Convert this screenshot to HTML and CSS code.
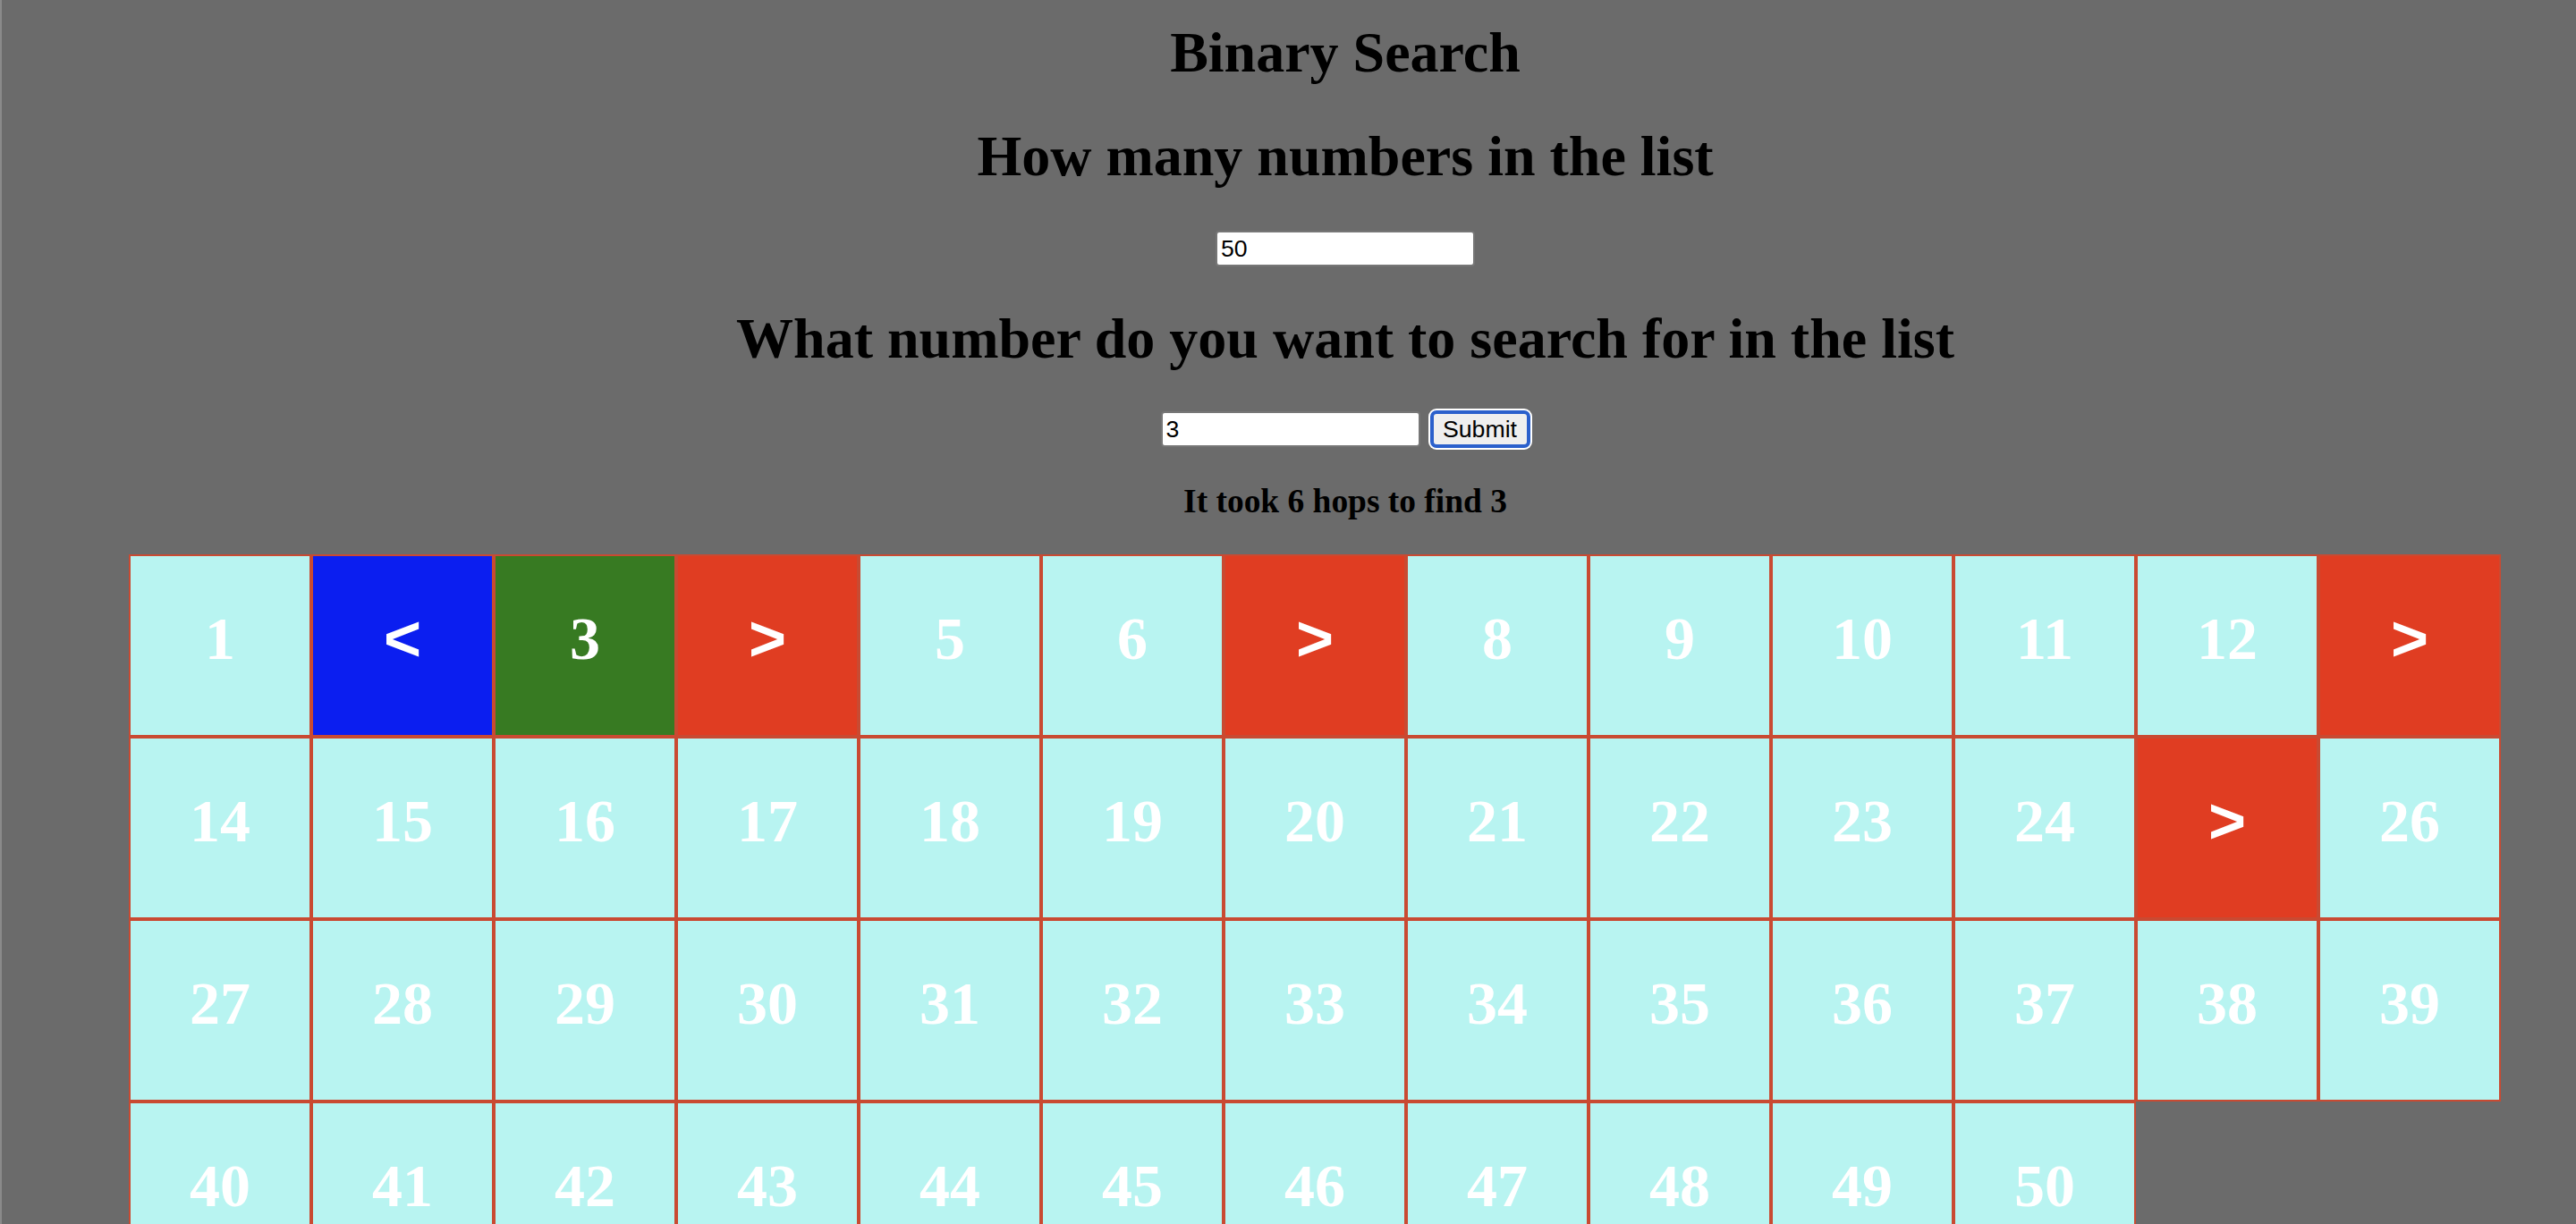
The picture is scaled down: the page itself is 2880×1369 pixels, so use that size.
FILE: index.html
```html
<!DOCTYPE html>
<html lang="en">
<head>
<meta charset="utf-8">
<title>Binary Search</title>
<link rel="stylesheet" href="styles.css">
</head>
<body>
<h1 class="title first">Binary Search</h1>
<h1 class="title second">How many numbers in the list</h1>
<div class="row row-count">
  <input class="field" type="text" value="50">
</div>
<h1 class="title third">What number do you want to search for in the list</h1>
<div class="row row-search">
  <input class="field" type="text" value="3">
  <button class="submit" type="button">Submit</button>
</div>
<h3 class="result">It took 6 hops to find 3</h3>
<div class="grid">
  <div class="cell">1</div>
  <div class="cell low"><span class="arrow">&lt;</span></div>
  <div class="cell found">3</div>
  <div class="cell high"><span class="arrow">&gt;</span></div>
  <div class="cell">5</div>
  <div class="cell">6</div>
  <div class="cell high"><span class="arrow">&gt;</span></div>
  <div class="cell">8</div>
  <div class="cell">9</div>
  <div class="cell">10</div>
  <div class="cell">11</div>
  <div class="cell">12</div>
  <div class="cell high"><span class="arrow">&gt;</span></div>
  <div class="cell">14</div>
  <div class="cell">15</div>
  <div class="cell">16</div>
  <div class="cell">17</div>
  <div class="cell">18</div>
  <div class="cell">19</div>
  <div class="cell">20</div>
  <div class="cell">21</div>
  <div class="cell">22</div>
  <div class="cell">23</div>
  <div class="cell">24</div>
  <div class="cell high"><span class="arrow">&gt;</span></div>
  <div class="cell">26</div>
  <div class="cell">27</div>
  <div class="cell">28</div>
  <div class="cell">29</div>
  <div class="cell">30</div>
  <div class="cell">31</div>
  <div class="cell">32</div>
  <div class="cell">33</div>
  <div class="cell">34</div>
  <div class="cell">35</div>
  <div class="cell">36</div>
  <div class="cell">37</div>
  <div class="cell">38</div>
  <div class="cell">39</div>
  <div class="cell">40</div>
  <div class="cell">41</div>
  <div class="cell">42</div>
  <div class="cell">43</div>
  <div class="cell">44</div>
  <div class="cell">45</div>
  <div class="cell">46</div>
  <div class="cell">47</div>
  <div class="cell">48</div>
  <div class="cell">49</div>
  <div class="cell">50</div>
</div>
</body>
</html>
```
FILE: styles.css
```css
html {
  overflow: hidden;
  background: #6b6b6b;
}

body {
  margin: 0 16px;
  padding: 0 0 0 128px;
  background: #6b6b6b;
  color: #000;
  font-family: "Liberation Serif", "Times New Roman", serif;
}

body::before {
  content: "";
  position: fixed;
  left: 0;
  top: 0;
  bottom: 0;
  width: 2px;
  background: #8a8a8a;
}

.title {
  font-size: 64px;
  font-weight: bold;
  line-height: 74px;
  text-align: center;
  margin: 0;
}

.first {
  margin-top: 22px;
}

.second {
  margin-top: 42px;
}

.third {
  margin-top: 44px;
}

.row {
  display: flex;
  justify-content: center;
  align-items: center;
}

.row-count {
  margin-top: 46px;
  height: 40px;
}

.row-search {
  margin-top: 42px;
  height: 44px;
}

.field {
  box-sizing: border-box;
  width: 290px;
  height: 40px;
  margin: 0;
  padding: 0 4px;
  border: 2px solid #767676;
  border-radius: 4px;
  background: #fff;
  color: #000;
  font-family: "Liberation Sans", Arial, sans-serif;
  font-size: 26.67px;
}

.submit {
  box-sizing: border-box;
  width: 112px;
  height: 42px;
  margin: 0 0 0 11px;
  padding: 0;
  border: 4px solid #2b60cc;
  border-radius: 7px;
  box-shadow: 0 0 0 2px #ffffff;
  background: #efefef;
  color: #000;
  font-family: "Liberation Sans", Arial, sans-serif;
  font-size: 26.67px;
  line-height: 34px;
}

.result {
  font-size: 37.44px;
  font-weight: bold;
  line-height: 43px;
  text-align: center;
  margin: 37px 0 0;
}

.grid {
  display: flex;
  flex-wrap: wrap;
  margin-top: 38px;
}

.cell {
  width: 200px;
  height: 142px;
  padding-top: 58px;
  border: 2px solid #c94a32;
  background: #b8f4f1;
  color: #fff;
  text-align: center;
  font-size: 68px;
  font-weight: bold;
  line-height: 68px;
}

.arrow {
  font-family: "Liberation Sans", Arial, sans-serif;
  font-weight: bold;
  font-size: 72px;
}

.low {
  background: #0b1ef0;
}

.found {
  background: #377a22;
}

.high {
  background: #e03d22;
}
```
